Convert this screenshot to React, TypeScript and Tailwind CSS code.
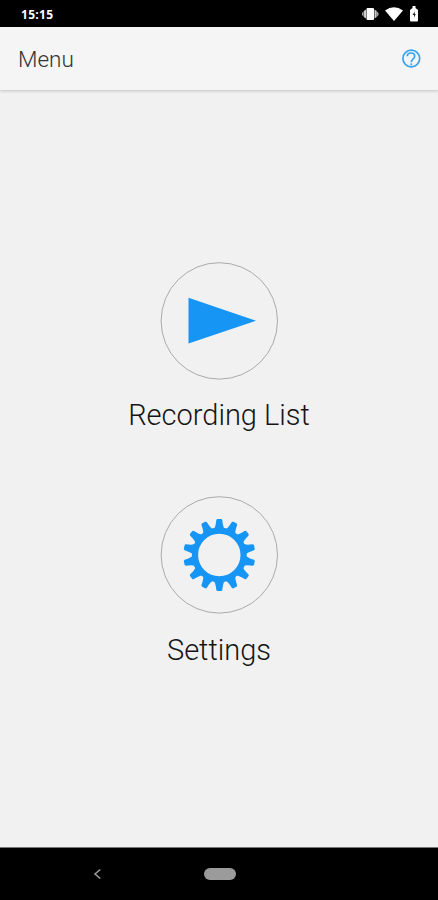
const gearTeeth = Array.from({ length: 14 }, (_, i) => (i * 360) / 14)

function StatusBar() {
  return (
    <div className="flex h-[27px] items-center justify-between bg-black pl-[21px] pr-[20px] text-white">
      <span className="pt-[3px] font-['Open_Sans',sans-serif] text-[12px] font-bold leading-none tracking-[0.3px]">15:15</span>
      <div className="flex items-center">
        <svg width="18" height="14" viewBox="0 0 18 14">
          <rect x="5.500" y="1" width="7.500" height="12" rx="1" fill="#fff" />
          <path d="M5 2.500 2.800 4v6L5 11.500ZM13.500 2.500 15.700 4v6l-2.200 1.500Z" fill="#ccc" />
          <path d="M2.500 4.500 1 6v2l1.500 1.500ZM16 4.500 17.500 6v2L16 9.500Z" fill="#aaa" />
        </svg>
        <svg className="ml-[6px]" width="18" height="14" viewBox="0 0 18 14">
          <path d="M0 3.500Q9-3 18 3.500L9 14Z" fill="#fff" />
        </svg>
        <svg className="ml-[7px]" width="8" height="16" viewBox="0 0 8 16">
          <path d="M2.500 0h3v2L8 4v10.500q0 1-1 1H1q-1 0-1-1V4L2.500 2Z" fill="#fff" />
          <path d="M4.700 5.500 2.500 9h1.500V11.500L5.800 8H4.700Z" fill="#222" />
        </svg>
      </div>
    </div>
  )
}

function PlayIcon() {
  return (
    <svg width="118" height="118" viewBox="0 0 118 118">
      <circle cx="59.300" cy="58.900" r="58.200" fill="none" stroke="#aaa" strokeWidth="1" />
      <path d="M28.500 35.700 96 58.700 28.500 81.500Z" fill="#1695f5" />
    </svg>
  )
}

function GearIcon() {
  return (
    <svg width="118" height="118" viewBox="0 0 118 118">
      <circle cx="59.300" cy="58.900" r="58.200" fill="none" stroke="#aaa" strokeWidth="1" />
      <g transform="translate(.3 0)">
        <circle cx="59" cy="59" r="24.300" fill="none" stroke="#1695f5" strokeWidth="6.200" />
        {gearTeeth.map((angle) => (
          <path
            key={angle}
            d="M53.500 33Q55.200 31.500 56 24.200Q56.200 23 57.400 23H60.600Q61.800 23 62 24.200Q62.800 31.500 64.500 33Z"
            fill="#1695f5"
            transform={`rotate(${angle} 59 59)`}
          />
        ))}
      </g>
    </svg>
  )
}

export default function App() {
  return (
    <div className="flex h-[900px] w-full flex-col bg-[#f1f1f1] font-[Roboto,sans-serif] text-[#151515]">
      <StatusBar />
      <header className="flex h-[63px] shrink-0 items-center justify-between bg-[#f5f5f5] pl-[18px] pr-[17px] shadow-[0_1px_3px_rgba(0,0,0,0.2)]">
        <h1 className="pt-[2px] text-[22.5px] font-light leading-none text-[#333]">Menu</h1>
        <svg width="20" height="20" viewBox="0 0 20 20" fill="none" stroke="#36a4ee" strokeWidth="1.700">
          <circle cx="10.300" cy="9.500" r="8.400" />
          <path d="M6.300 7.300Q6.300 4 10 4t3.700 3.300Q13.700 9 11.800 10.300 10.300 11.500 10.300 13.300" />
          <path d="M10.300 14.400v1.800" />
        </svg>
      </header>

      <main className="flex flex-1 flex-col items-center pt-[172px]">
        <button className="flex h-[234px] flex-col items-center">
          <PlayIcon />
          <span className="mt-[17px] text-[29px] font-light leading-[36px]">Recording List</span>
        </button>
        <button className="flex flex-col items-center">
          <GearIcon />
          <span className="mt-[18px] text-[29px] font-light leading-[36px]">Settings</span>
        </button>
      </main>

      {/* Android navigation */}
      <nav className="flex h-[53px] shrink-0 items-center border-t border-[#777] bg-black pl-[93px]">
        <svg width="9" height="12" viewBox="0 0 9 12" fill="none" stroke="#999" strokeWidth="1.600">
          <path d="M7.300 1.500 2 6l5.300 4.500" />
        </svg>
        <div className="ml-[102px] h-[12px] w-[32px] rounded-full bg-[#9b9b9b]" />
      </nav>
    </div>
  )
}
